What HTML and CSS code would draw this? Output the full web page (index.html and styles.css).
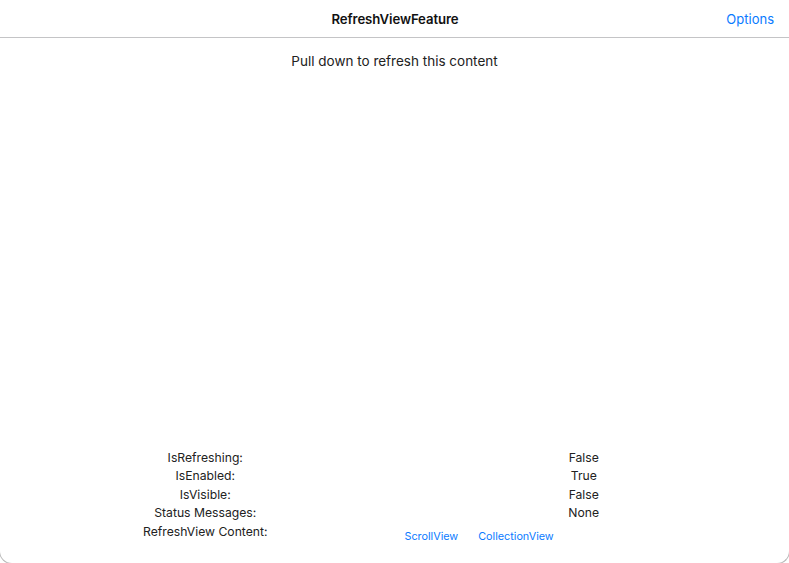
FILE: index.html
```html
<!DOCTYPE html>
<html>
<head>
<meta charset="utf-8">
<link rel="stylesheet" href="styles.css">
</head>
<body>
<div class="app">
  <header class="navbar">
    <div class="nav-side"></div>
    <div class="nav-title">RefreshViewFeature</div>
    <div class="nav-side nav-right"><span class="nav-btn">Options</span></div>
  </header>
  <main class="content">
    <p class="hint">Pull down to refresh this content</p>
    <div class="stats">
      <div class="label">IsRefreshing:</div><div class="value">False</div>
      <div class="label">IsEnabled:</div><div class="value">True</div>
      <div class="label">IsVisible:</div><div class="value">False</div>
      <div class="label">Status Messages:</div><div class="value">None</div>
      <div class="label">RefreshView Content:</div>
      <div class="buttons"><span class="link-btn">ScrollView</span><span class="link-btn">CollectionView</span></div>
    </div>
  </main>
</div>
</body>
</html>
```
FILE: styles.css
```css
* { box-sizing: border-box; }
html, body { margin: 0; padding: 0; background: #fff; overflow: hidden; }
body {
  font-family: Inter, "Liberation Sans", sans-serif;
  color: #222;
  width: 789px;
  height: 563px;
}
.app {
  margin: 0 -1px;
  width: 791px;
  height: 564px;
  border: 1px solid #b8b8b8;
  border-top: none;
  border-radius: 0 0 13px 13px;
  display: flex;
  flex-direction: column;
  background: #fff;
}
.navbar {
  height: 38px;
  flex: none;
  border-bottom: 1px solid #c4c4c6;
  display: flex;
  align-items: center;
  padding: 0 15px 0 16px;
}
.nav-side { flex: 1; display: flex; }
.nav-right { justify-content: flex-end; }
.nav-title {
  font-size: 13.2px;
  font-weight: 600;
  color: #111;
  letter-spacing: -0.1px;
}
.nav-btn {
  color: #0a7aff;
  font-size: 13px;
}
.content {
  flex: 1;
  display: flex;
  flex-direction: column;
  padding: 0 0 22px;
}
.hint {
  margin: 14px 0 0;
  text-align: center;
  font-size: 13.5px;
  line-height: 18px;
  color: #222;
}
.stats {
  margin-top: auto;
  display: grid;
  grid-template-columns: 1fr 1fr;
  grid-auto-rows: 18.5px;
  padding: 0 16px;
  font-size: 12.2px;
  line-height: 18.5px;
  align-items: start;
}
.label { text-align: center; }
.value { text-align: center; }
.buttons {
  grid-column: 2;
  display: flex;
  height: 28px;
  align-items: center;
  padding-top: 1px;
}
.link-btn {
  color: #0a7aff;
  font-size: 10.8px;
  padding: 0 10px;
}
```
